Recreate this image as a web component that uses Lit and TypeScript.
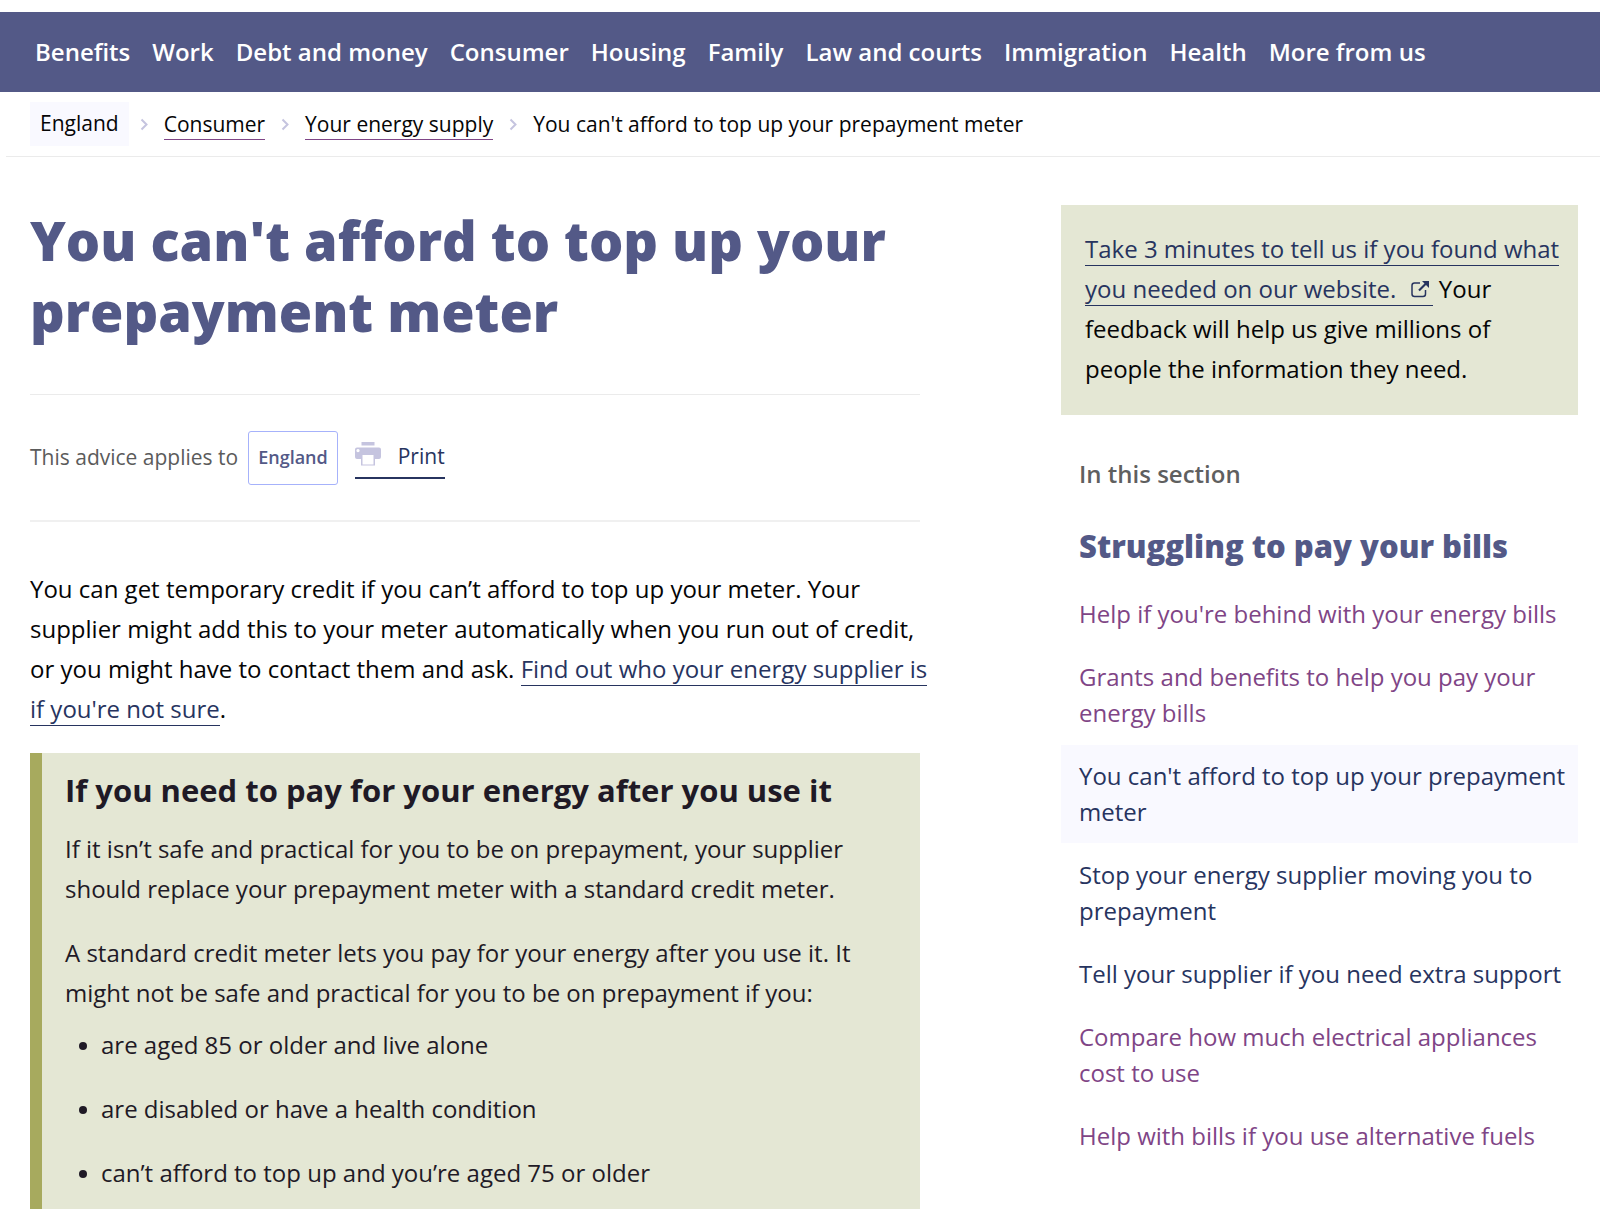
import { LitElement, html, css } from "lit";
import { customElement } from "lit/decorators.js";
import { classMap } from "lit/directives/class-map.js";

const NAV = [
  "Benefits", "Work", "Debt and money", "Consumer", "Housing", "Family",
  "Law and courts", "Immigration", "Health", "More from us",
];

interface SectionLink { label: string; visited?: boolean; current?: boolean }

const SECTION: SectionLink[] = [
  { label: "Help if you're behind with your energy bills", visited: true },
  { label: "Grants and benefits to help you pay your energy bills", visited: true },
  { label: "You can't afford to top up your prepayment meter", current: true },
  { label: "Stop your energy supplier moving you to prepayment" },
  { label: "Tell your supplier if you need extra support" },
  { label: "Compare how much electrical appliances cost to use", visited: true },
  { label: "Help with bills if you use alternative fuels", visited: true },
];

const SITUATIONS = [
  "are aged 85 or older and live alone",
  "are disabled or have a health condition",
  "can’t afford to top up and you’re aged 75 or older",
];

@customElement("app-root")
export class AppRoot extends LitElement {
  static styles = css`
    :host {
      --brand: #535987;
      --link: #27345f;
      --visited: #7f4586;
      --sage: #e4e7d4;
      --tint: #f9f9ff;
      --rule: #ebebeb;
      display: block;
      box-sizing: border-box;
      height: 100vh;
      overflow: hidden;
      padding-top: 12px;
      background: #fff;
      color: #050506;
      font-family: "Open Sans", "Noto Sans", sans-serif;
      font-size: 24px;
      line-height: 40px;
    }
    *, *::before, *::after { box-sizing: border-box; }
    h1, h2, h3, p, ul, ol { margin: 0; padding: 0; }
    a { color: var(--link); text-decoration: none; }

    .primary { background: var(--brand); padding: 20px 35px; }
    .primary ul { display: flex; gap: 22px; list-style: none; }
    .primary a { color: #fff; font-weight: 600; white-space: nowrap; }

    .crumbs {
      margin-left: 6px;
      padding: 10px 24px;
      border-bottom: 1px solid var(--rule);
      font-size: 21px;
      line-height: 28px;
    }
    .crumbs ol { display: flex; align-items: baseline; list-style: none; }
    .crumbs li { display: flex; align-items: center; }
    .crumbs svg { width: 8px; height: 13px; margin: 0 16px; color: #c5c4df; }
    .crumbs li:nth-child(2) svg { margin-left: 11px; }
    .crumb { padding-bottom: 1px; color: inherit; border-bottom: 1px solid transparent; }
    a.crumb { border-color: var(--visited); }
    .region { padding: 7px 10px 9px; background: var(--tint); }

    .layout {
      display: grid;
      grid-template-columns: 890fr 517fr;
      column-gap: 141px;
      align-items: start;
      padding: 48px 22px 0 30px;
    }
    h1 { padding-bottom: 47px; color: var(--brand); font-size: 54px; line-height: 71px; font-weight: 800; }

    .applies {
      display: flex;
      align-items: center;
      padding: 36px 0 35px;
      border-top: 1px solid var(--rule);
      border-bottom: 2px solid #f0f0f0;
      font-size: 21px;
      line-height: 32px;
      color: #5b5b5b;
    }
    .label { padding-bottom: 3px; }
    .badge {
      margin: 0 17px 0 10px;
      padding: 9px 9px 11px;
      border: 1px solid #a6b2fb;
      border-radius: 3px;
      color: var(--brand);
      font-size: 18px;
      font-weight: 600;
    }
    .print {
      display: flex;
      align-items: flex-start;
      gap: 17px;
      padding: 3px 0 5px;
      border: 0;
      border-bottom: 2px solid var(--link);
      background: none;
      color: var(--link);
      font: inherit;
    }
    .print svg { width: 26px; height: 24px; margin-top: 2px; }

    .intro { margin-right: -16px; padding: 47px 0 24px; }
    .inline { border-bottom: 1px solid currentColor; }

    .callout { padding: 17px 24px 24px 23px; border-left: 12px solid #a7aa5e; background: var(--sage); color: #1f1a26; }
    h3 { padding-bottom: 19px; font-size: 31px; line-height: 40px; font-weight: 700; }
    .callout p + p { margin-top: 24px; }
    .callout ul { display: grid; gap: 24px; margin-top: 12px; padding-left: 14px; list-style: none; }
    .callout li { display: flex; gap: 14px; }
    .callout li::before {
      content: "";
      flex: none;
      width: 8px;
      height: 8px;
      margin-top: 17px;
      border-radius: 50%;
      background: currentColor;
    }

    .feedback { padding: 24px 16px 26px 24px; background: var(--sage); }
    .ext { width: 18px; height: 18px; margin: 0 4px 0 8px; }
    .section { padding-top: 39px; }
    .eyebrow { padding: 0 18px; color: #5f5f5f; font-weight: 600; }
    h2 { padding: 32px 18px 17px; color: var(--brand); font-size: 31px; line-height: 40px; font-weight: 800; }
    .section ul { display: grid; row-gap: 1px; list-style: none; }
    .section li a { display: block; padding: 13px 8px 13px 18px; line-height: 36px; }
    .visited { color: var(--visited); }
    .current { background: var(--tint); }
  `;

  render() {
    return html`
      <nav class="primary" aria-label="Main">
        <ul>${NAV.map((n) => html`<li><a href="#">${n}</a></li>`)}</ul>
      </nav>
      <nav class="crumbs" aria-label="Breadcrumb">
        <ol>
          <li><span class="region">England</span></li>
          <li>${this.arrow()}<a class="crumb" href="#">Consumer</a></li>
          <li>${this.arrow()}<a class="crumb" href="#">Your energy supply</a></li>
          <li aria-current="page">${this.arrow()}<span class="crumb">You can't afford to top up your prepayment meter</span></li>
        </ol>
      </nav>
      <div class="layout">
        <main>
          <h1>You can't afford to top up your prepayment meter</h1>
          <div class="applies">
            <span class="label">This advice applies to</span>
            <span class="badge">England</span>
            <button class="print" type="button">${this.printer()}<span>Print</span></button>
          </div>
          <p class="intro">You can get temporary credit if you can’t afford to top up your meter. Your supplier might add this to your meter automatically when you run out of credit, or you might have to contact them and ask. <a class="inline" href="#">Find out who your energy supplier is if you're not sure</a>.</p>
          <section class="callout">
            <h3>If you need to pay for your energy after you use it</h3>
            <p>If it isn’t safe and practical for you to be on prepayment, your supplier should replace your prepayment meter with a standard credit meter.</p>
            <p>A standard credit meter lets you pay for your energy after you use it. It might not be safe and practical for you to be on prepayment if you:</p>
            <ul>${SITUATIONS.map((s) => html`<li>${s}</li>`)}</ul>
          </section>
        </main>
        <aside>
          <p class="feedback"><a class="inline" href="#">Take 3 minutes to tell us if you found what you needed on our website. ${this.external()}</a> Your feedback will help us give millions of people the information they need.</p>
          <nav class="section" aria-label="In this section">
            <p class="eyebrow">In this section</p>
            <h2>Struggling to pay your bills</h2>
            <ul>
              ${SECTION.map((s) => html`<li><a href="#" class=${classMap({ visited: !!s.visited, current: !!s.current })}>${s.label}</a></li>`)}
            </ul>
          </nav>
        </aside>
      </div>
    `;
  }

  private arrow() {
    return html`<svg viewBox="0 0 8 13" aria-hidden="true">
      <path d="M1.500 1.500 6.500 6.500 1.500 11.500" fill="none" stroke="currentColor" stroke-width="2" />
    </svg>`;
  }

  private printer() {
    return html`<svg viewBox="0 0 26 24" aria-hidden="true">
      <rect x="6.500" y="0" width="13" height="3.500" fill="#c5c4df" />
      <path fill="#c5c4df" fill-rule="evenodd" d="M2 5.500h22a2 2 0 0 1 2 2V15a2 2 0 0 1-2 2h-4v6.500H6V17H2a2 2 0 0 1-2-2V7.500a2 2 0 0 1 2-2ZM3 7a1.600 1.600 0 1 0 .01 0ZM7.500 13v9.500h11V13Z" />
    </svg>`;
  }

  private external() {
    return html`<svg class="ext" viewBox="0 0 18 18" aria-hidden="true">
      <path d="M9 3H3.500Q1 3 1 5.500v8.500Q1 16.500 3.500 16.500H12q2.500 0 2.500-2.500V10" fill="none" stroke="currentColor" stroke-width="1.500" />
      <path d="M8 10.500 15 3.500" stroke="currentColor" stroke-width="2.200" />
      <path d="M11 1h7v7Z" fill="currentColor" />
    </svg>`;
  }
}
